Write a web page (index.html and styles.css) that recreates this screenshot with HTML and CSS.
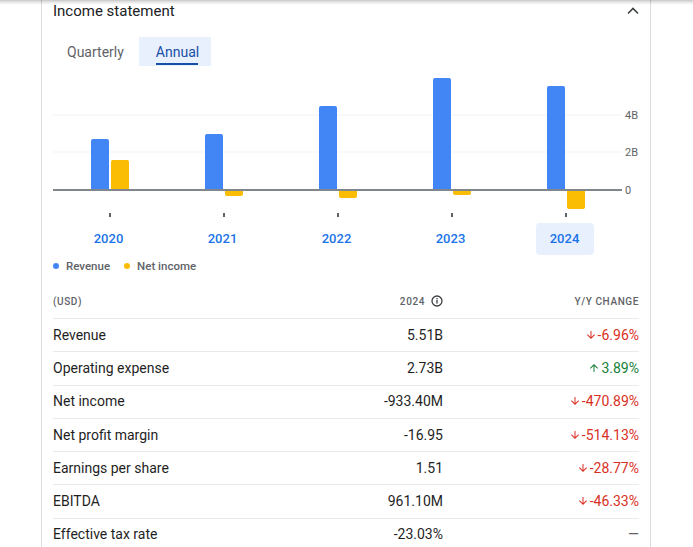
FILE: index.html
```html
<!DOCTYPE html>
<html lang="en">
<head>
<meta charset="utf-8">
<title>Income statement</title>
<link rel="stylesheet" href="styles.css">
</head>
<body>
<div class="top-shadow"></div>
<main class="card">
  <header class="card-head">
    <h2 class="title">Income statement</h2>
    <svg class="chevron" width="18" height="18" viewBox="0 0 18 18"><path d="M4 11.5 L9 6.5 L14 11.5" fill="none" stroke="#3c4043" stroke-width="1.6"/></svg>
  </header>

  <nav class="tabs">
    <div class="tab">Quarterly</div>
    <div class="tab tab-active">Annual</div>
  </nav>

  <svg class="chart" width="586" height="157" viewBox="0 0 586 157">
    <line x1="0" y1="49" x2="569" y2="49" stroke="#f1f3f4" stroke-width="1"/>
    <line x1="0" y1="86" x2="569" y2="86" stroke="#f1f3f4" stroke-width="1"/>
    <text x="572" y="53" class="axis-label">4B</text>
    <text x="572" y="90" class="axis-label">2B</text>
    <text x="572" y="128" class="axis-label">0</text>

    <!-- 2020 -->
    <rect x="38" y="73" width="18" height="52" rx="2" fill="#4285f4"/>
    <rect x="58" y="94" width="18" height="31" rx="2" fill="#fbbc04"/>
    <!-- 2021 -->
    <rect x="152" y="68" width="18" height="57" rx="2" fill="#4285f4"/>
    <rect x="172" y="123" width="18" height="7" rx="2" fill="#fbbc04"/>
    <!-- 2022 -->
    <rect x="266" y="40" width="18" height="85" rx="2" fill="#4285f4"/>
    <rect x="286" y="123" width="18" height="9" rx="2" fill="#fbbc04"/>
    <!-- 2023 -->
    <rect x="380" y="12" width="18" height="113" rx="2" fill="#4285f4"/>
    <rect x="400" y="123" width="18" height="6" rx="2" fill="#fbbc04"/>
    <!-- 2024 -->
    <rect x="494" y="20" width="18" height="105" rx="2" fill="#4285f4"/>
    <rect x="514" y="123" width="18" height="20" rx="2" fill="#fbbc04"/>

    <line x1="0" y1="124" x2="569" y2="124" stroke="#80868b" stroke-width="2"/>

    <rect x="56" y="147" width="2" height="4" fill="#5f6368"/>
    <rect x="170" y="147" width="2" height="4" fill="#5f6368"/>
    <rect x="284" y="147" width="2" height="4" fill="#5f6368"/>
    <rect x="398" y="147" width="2" height="4" fill="#5f6368"/>
    <rect x="512" y="147" width="2" height="4" fill="#5f6368"/>
  </svg>

  <div class="years">
    <div class="year"><span>2020</span></div>
    <div class="year"><span>2021</span></div>
    <div class="year"><span>2022</span></div>
    <div class="year"><span>2023</span></div>
    <div class="year"><span class="year-active">2024</span></div>
  </div>

  <div class="legend">
    <span class="legend-item"><i class="dot dot-blue"></i>Revenue</span>
    <span class="legend-item"><i class="dot dot-yellow"></i>Net income</span>
  </div>

  <section class="table">
    <div class="row row-head">
      <div class="cell">(USD)</div>
      <div class="cell num">2024
        <svg class="info" width="12" height="12" viewBox="0 0 12 12"><circle cx="6" cy="6" r="5" fill="none" stroke="#3c4043" stroke-width="1.3"/><rect x="5.35" y="5" width="1.3" height="3.6" fill="#3c4043"/><rect x="5.35" y="3" width="1.3" height="1.3" fill="#3c4043"/></svg>
      </div>
      <div class="cell num">Y/Y CHANGE</div>
    </div>

    <div class="row">
      <div class="cell">Revenue</div>
      <div class="cell num">5.51B</div>
      <div class="cell num down"><svg class="arrow" viewBox="0 0 24 24"><path d="M20 12l-1.41-1.41L13 16.17V4h-2v12.17l-5.58-5.59L4 12l8 8 8-8z"/></svg>-6.96%</div>
    </div>
    <div class="row">
      <div class="cell">Operating expense</div>
      <div class="cell num">2.73B</div>
      <div class="cell num up"><svg class="arrow" viewBox="0 0 24 24"><path d="M4 12l1.41 1.41L11 7.83V20h2V7.83l5.58 5.59L20 12l-8-8-8 8z"/></svg>3.89%</div>
    </div>
    <div class="row">
      <div class="cell">Net income</div>
      <div class="cell num">-933.40M</div>
      <div class="cell num down"><svg class="arrow" viewBox="0 0 24 24"><path d="M20 12l-1.41-1.41L13 16.17V4h-2v12.17l-5.58-5.59L4 12l8 8 8-8z"/></svg>-470.89%</div>
    </div>
    <div class="row">
      <div class="cell">Net profit margin</div>
      <div class="cell num">-16.95</div>
      <div class="cell num down"><svg class="arrow" viewBox="0 0 24 24"><path d="M20 12l-1.41-1.41L13 16.17V4h-2v12.17l-5.58-5.59L4 12l8 8 8-8z"/></svg>-514.13%</div>
    </div>
    <div class="row">
      <div class="cell">Earnings per share</div>
      <div class="cell num">1.51</div>
      <div class="cell num down"><svg class="arrow" viewBox="0 0 24 24"><path d="M20 12l-1.41-1.41L13 16.17V4h-2v12.17l-5.58-5.59L4 12l8 8 8-8z"/></svg>-28.77%</div>
    </div>
    <div class="row">
      <div class="cell">EBITDA</div>
      <div class="cell num">961.10M</div>
      <div class="cell num down"><svg class="arrow" viewBox="0 0 24 24"><path d="M20 12l-1.41-1.41L13 16.17V4h-2v12.17l-5.58-5.59L4 12l8 8 8-8z"/></svg>-46.33%</div>
    </div>
    <div class="row">
      <div class="cell">Effective tax rate</div>
      <div class="cell num">-23.03%</div>
      <div class="cell num dash">&mdash;</div>
    </div>
  </section>
</main>
</body>
</html>
```

FILE: styles.css
```css
* { box-sizing: border-box; }

html, body {
  margin: 0;
  padding: 0;
  background: #ffffff;
  font-family: Roboto, "Liberation Sans", Arial, sans-serif;
  color: #202124;
  overflow: hidden;
}

.top-shadow {
  position: fixed;
  top: 0;
  left: 0;
  right: 0;
  height: 5px;
  background: linear-gradient(to bottom, rgba(0,0,0,0.22), rgba(0,0,0,0.08) 50%, rgba(0,0,0,0));
  z-index: 5;
}

.card {
  margin-left: 41px;
  width: 610px;
  min-height: 547px;
  border-left: 1px solid #dadce0;
  border-right: 1px solid #dadce0;
  padding: 0 11px;
}

.card-head {
  display: flex;
  justify-content: space-between;
  align-items: center;
  height: 22px;
}

.title {
  margin: 0;
  font-size: 15px;
  font-weight: 400;
  line-height: 22px;
  color: #202124;
}

.chevron { display: block; margin-right: -3px; }

.tabs {
  display: flex;
  margin-top: 15px;
  height: 29px;
}

.tab {
  position: relative;
  display: flex;
  align-items: center;
  padding: 0 14px;
  font-size: 14px;
  font-weight: 400;
  color: #5f6368;
}

.tab-active {
  background: #e8f0fe;
  color: #174ea6;
  padding: 0 12px 0 17px;
  margin-left: 1px;
}

.tab-active::after {
  content: "";
  position: absolute;
  left: 17px;
  right: 13px;
  bottom: 1px;
  height: 2px;
  background: #174ea6;
}

.chart { display: block; }

.axis-label {
  font-family: Roboto, "Liberation Sans", Arial, sans-serif;
  font-size: 11px;
  fill: #5f6368;
}

.years {
  display: grid;
  grid-template-columns: repeat(5, 114px);
  height: 32px;
}

.year {
  display: flex;
  justify-content: center;
  align-items: center;
}

.year span {
  display: flex;
  align-items: center;
  justify-content: center;
  width: 58px;
  height: 32px;
  margin-right: 3px;
  padding-bottom: 2px;
  border-radius: 4px;
  font-size: 13px;
  font-weight: 500;
  color: #1a73e8;
}

.year .year-active { background: #e8f0fe; }

.legend {
  display: flex;
  gap: 14px;
  margin-top: 4px;
  height: 14px;
  align-items: center;
  font-size: 11.5px;
  font-weight: 500;
  color: #5f6368;
}

.legend-item {
  display: flex;
  align-items: center;
  gap: 7px;
}

.dot {
  display: block;
  width: 6px;
  height: 6px;
  border-radius: 50%;
}
.dot-blue { background: #4285f4; }
.dot-yellow { background: #fbbc04; }

.table { margin-top: 17px; }

.row {
  display: grid;
  grid-template-columns: 1fr 120px 196px;
  align-items: center;
  min-height: 33.3px;
  padding-bottom: 1px;
  border-top: 1px solid #e8eaed;
  font-size: 14px;
  font-weight: 400;
  color: #1f1f1f;
}

.row-head {
  border-top: none;
  min-height: 28px;
  height: 28px;
  padding-bottom: 6px;
  font-size: 10px;
  font-weight: 500;
  letter-spacing: 0.6px;
  color: #5f6368;
}

.num {
  display: flex;
  justify-content: flex-end;
  align-items: center;
}

.info { margin-left: 6px; }

.arrow {
  width: 12px;
  height: 12px;
  margin-right: 1px;
}

.down { color: #d93025; }
.down .arrow { fill: #d93025; }
.up { color: #188038; }
.up .arrow { fill: #188038; }
.dash { color: #5f6368; }
```
